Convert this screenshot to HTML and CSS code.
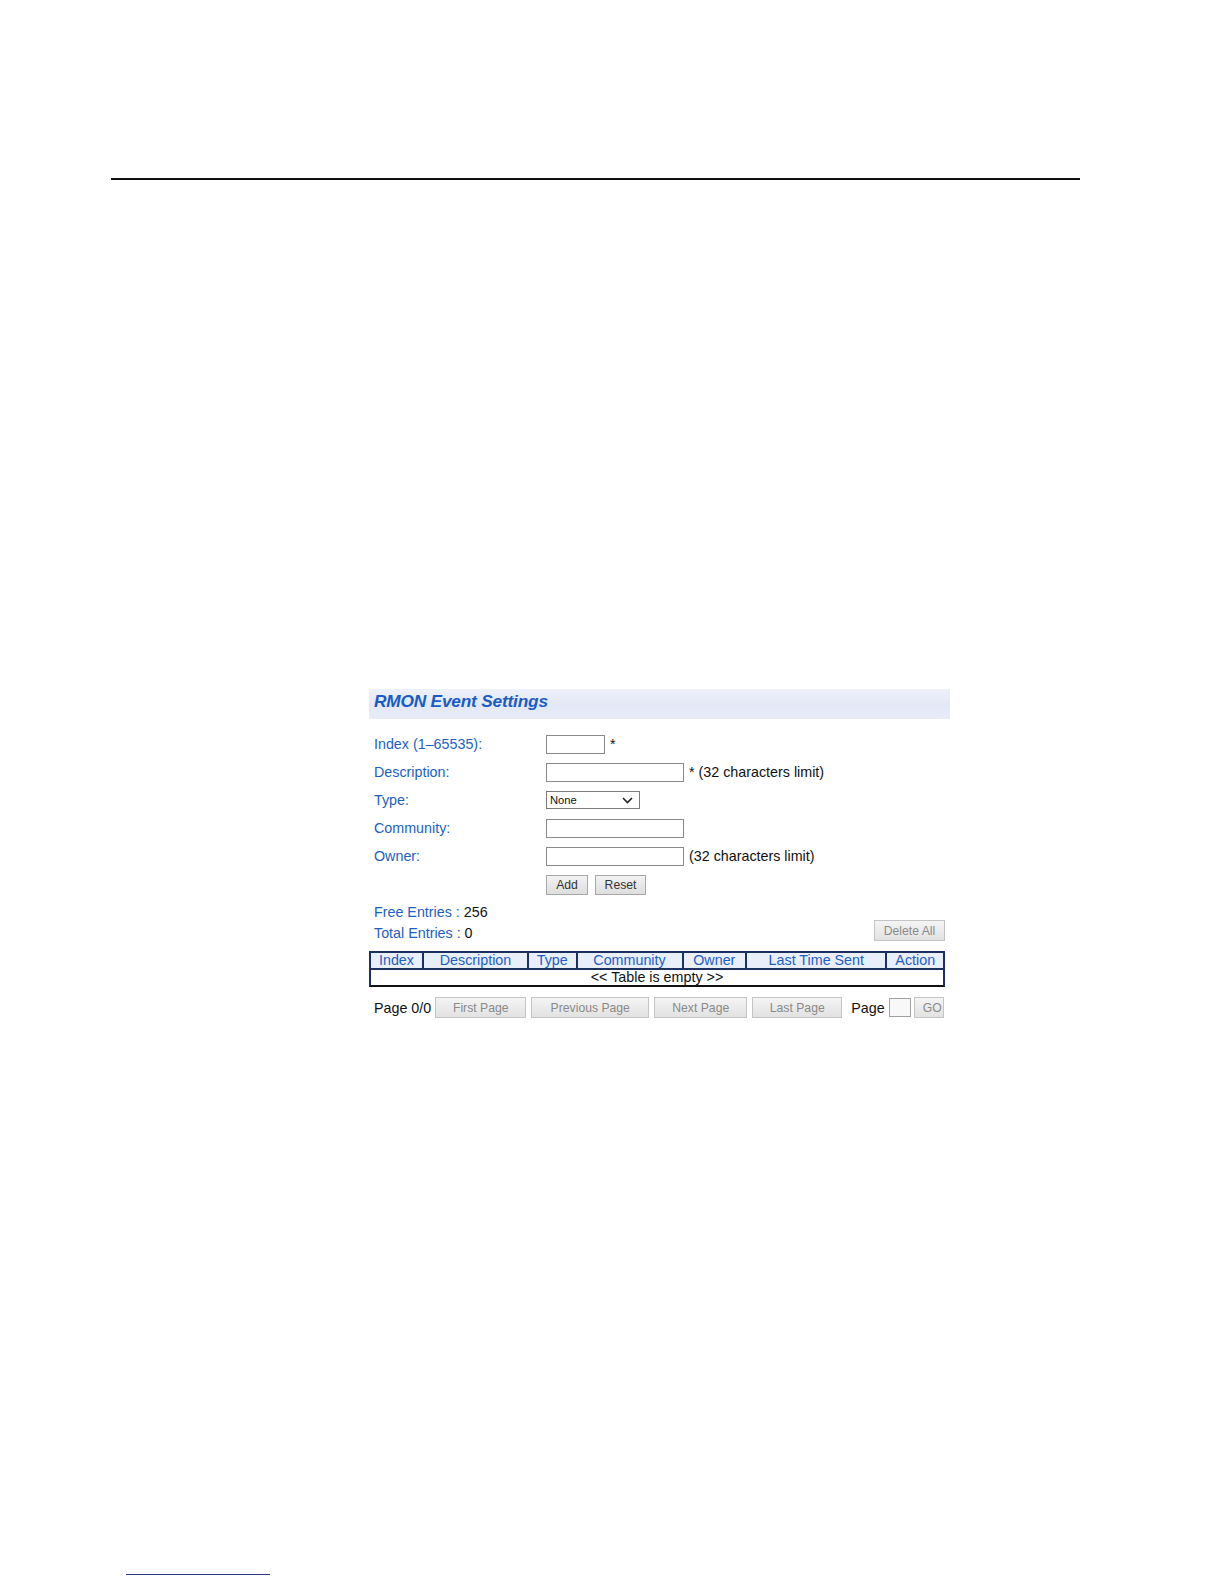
FILE: index.html
```html
<!DOCTYPE html>
<html>
<head>
<meta charset="utf-8">
<link rel="stylesheet" href="styles.css">
</head>
<body>
<div class="page">
  <div class="top-rule"></div>
  <div class="panel">
    <div class="title-bar"><span class="title">RMON Event Settings</span></div>
    <div class="form">
      <div class="row">
        <span class="label">Index (1–65535):</span>
        <span class="field"><span class="input w58"></span><span class="note">*</span></span>
      </div>
      <div class="row">
        <span class="label">Description:</span>
        <span class="field"><span class="input w137"></span><span class="note">* (32 characters limit)</span></span>
      </div>
      <div class="row">
        <span class="label">Type:</span>
        <span class="field"><span class="select">None<svg class="chev" width="11" height="7" viewBox="0 0 11 7"><path d="M1 1 L5.5 5.5 L10 1" fill="none" stroke="#222" stroke-width="1.6"/></svg></span></span>
      </div>
      <div class="row">
        <span class="label">Community:</span>
        <span class="field"><span class="input w137"></span></span>
      </div>
      <div class="row">
        <span class="label">Owner:</span>
        <span class="field"><span class="input w137"></span><span class="note">(32 characters limit)</span></span>
      </div>
      <div class="row btn-row">
        <span class="label"></span>
        <span class="field"><span class="btn add">Add</span><span class="btn reset">Reset</span></span>
      </div>
    </div>
    <div class="entries">
      <div class="entry-lines">
        <div class="entry"><span class="blue">Free Entries : </span>256</div>
        <div class="entry"><span class="blue">Total Entries : </span>0</div>
      </div>
      <span class="btn gray delete">Delete All</span>
    </div>
    <div class="table">
      <div class="thead">
        <span class="th c1">Index</span>
        <span class="th c2">Description</span>
        <span class="th c3">Type</span>
        <span class="th c4">Community</span>
        <span class="th c5">Owner</span>
        <span class="th c6">Last Time Sent</span>
        <span class="th c7">Action</span>
      </div>
      <div class="tbody">&lt;&lt; Table is empty &gt;&gt;</div>
    </div>
    <div class="pager">
      <span class="ptext">Page 0/0</span>
      <span class="btn gray pb1">First Page</span>
      <span class="btn gray pb2">Previous Page</span>
      <span class="btn gray pb3">Next Page</span>
      <span class="btn gray pb4">Last Page</span>
      <span class="ptext page2">Page</span>
      <span class="pinput"></span>
      <span class="btn gray go">GO</span>
    </div>
  </div>
  <div class="bottom-rule"></div>
</div>
</body>
</html>
```
FILE: styles.css
```css
html, body {
  margin: 0;
  padding: 0;
  background: #ffffff;
}
.page {
  width: 1224px;
  height: 1584px;
  box-sizing: border-box;
  padding-top: 178px;
  position: relative;
  overflow: hidden;
  font-family: "Liberation Sans", Arial, sans-serif;
  color: #111;
}
.top-rule {
  margin-left: 111px;
  width: 969px;
  height: 2px;
  background: #111;
}
.panel {
  margin: 509px 0 0 369px;
  width: 581px;
}
.title-bar {
  height: 30px;
  box-sizing: border-box;
  background: linear-gradient(to bottom, #eef1fa 0%, #e3e8f6 50%, #e8ecf8 100%);
  display: flex;
  align-items: center;
  padding: 0 0 5px 5px;
}
.title {
  font-size: 17.3px;
  font-weight: bold;
  font-style: italic;
  color: #1a5cc4;
  letter-spacing: -0.2px;
}
.form {
  margin-top: 11px;
  padding-left: 5px;
}
.row {
  display: flex;
  align-items: center;
  height: 28px;
}
.label {
  width: 172px;
  flex: none;
  font-size: 14.3px;
  color: #1e5fbf;
}
.field {
  display: flex;
  align-items: center;
}
.input {
  display: inline-block;
  box-sizing: border-box;
  height: 19px;
  border: 1px solid #8a8a8a;
  background: #fff;
}
.w58 { width: 59px; }
.w137 { width: 138px; }
.note {
  font-size: 14.3px;
  margin-left: 5px;
  color: #111;
}
.select {
  border: 1px solid #7a7a7a;
  font-size: 11.2px;
  display: flex;
  align-items: center;
  justify-content: space-between;
  padding: 0 6px 0 3px;
  box-sizing: border-box;
  width: 94px;
  height: 18px;
}
.btn {
  display: inline-flex;
  align-items: center;
  justify-content: center;
  box-sizing: border-box;
  height: 20px;
  border: 1px solid #a8a8a8;
  background: linear-gradient(to bottom, #f2f2f2, #dedede);
  font-size: 12.2px;
  color: #333;
}
.add { width: 42px; }
.reset { width: 51px; margin-left: 7px; }
.btn-row { height: 30px; }
.gray {
  color: #8a8a8a;
  background: linear-gradient(to bottom, #f4f4f4, #e2e2e2);
  border-color: #c4c4c4;
}
.entries {
  display: flex;
  justify-content: space-between;
  align-items: flex-end;
  padding-left: 5px;
  margin-top: 2px;
}
.entry {
  font-size: 14.3px;
  height: 21px;
  line-height: 21px;
}
.blue { color: #1e5fbf; }
.delete {
  width: 71px;
  height: 21px;
  margin-right: 5px;
  margin-bottom: 3px;
}
.table {
  margin-top: 7px;
  width: 576px;
  border: 2px solid #1b3260;
  box-sizing: border-box;
  border-bottom-color: #111;
}
.thead {
  display: flex;
  height: 17px;
}
.th {
  box-sizing: border-box;
  background: #e8eefa;
  color: #1e5fbf;
  font-size: 14.3px;
  line-height: 15px;
  text-align: center;
  border-left: 2px solid #1b3260;
  border-bottom: 2px solid #1b3260;
  height: 17px;
  white-space: nowrap;
}
.c1 { width: 51px; border-left: none; }
.c2 { width: 105px; }
.c3 { width: 48.5px; }
.c4 { width: 106px; }
.c5 { width: 63.6px; }
.c6 { width: 140.4px; }
.c7 { flex: 1; }
.tbody {
  text-align: center;
  font-size: 14.3px;
  height: 15px;
  line-height: 15px;
}
.pager {
  display: flex;
  align-items: center;
  margin-top: 10px;
  padding-left: 5px;
}
.ptext { font-size: 14.3px; }
.pager .btn { height: 21px; }
.pb1 { width: 91px; margin-left: 4px; }
.pb2 { width: 118px; margin-left: 5px; }
.pb3 { width: 93px; margin-left: 5px; }
.pb4 { width: 90px; margin-left: 5px; }
.page2 { margin-left: 9px; }
.pinput {
  box-sizing: border-box;
  width: 22px;
  height: 19px;
  border: 1px solid #a0a0a0;
  margin-left: 4px;
  background: #f8f8f8;
}
.go { width: 30px; margin-left: 3px; justify-content: flex-end; padding-right: 1px; overflow: hidden; }
.bottom-rule {
  position: absolute;
  left: 126px;
  top: 1574px;
  width: 144px;
  height: 1px;
  background: #2a3a8a;
}
```
